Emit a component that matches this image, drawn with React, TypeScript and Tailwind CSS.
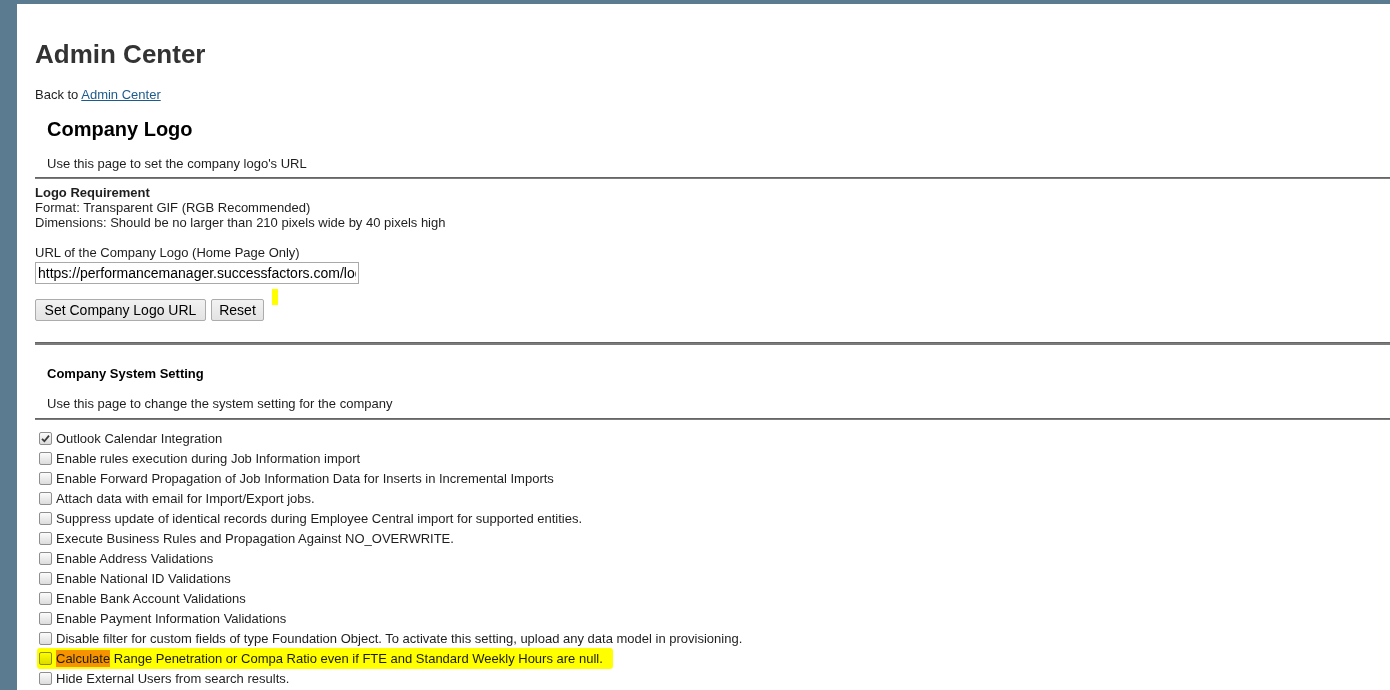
import React from 'react';

const settings: { label: string; checked?: boolean; mark?: boolean }[] = [
  { label: 'Outlook Calendar Integration', checked: true },
  { label: 'Enable rules execution during Job Information import' },
  { label: 'Enable Forward Propagation of Job Information Data for Inserts in Incremental Imports' },
  { label: 'Attach data with email for Import/Export jobs.' },
  { label: 'Suppress update of identical records during Employee Central import for supported entities.' },
  { label: 'Execute Business Rules and Propagation Against NO_OVERWRITE.' },
  { label: 'Enable Address Validations' },
  { label: 'Enable National ID Validations' },
  { label: 'Enable Bank Account Validations' },
  { label: 'Enable Payment Information Validations' },
  { label: 'Disable filter for custom fields of type Foundation Object. To activate this setting, upload any data model in provisioning.' },
  { label: 'Calculate Range Penetration or Compa Ratio even if FTE and Standard Weekly Hours are null.', mark: true },
  { label: 'Hide External Users from search results.' },
];

const Checkbox: React.FC<{ checked?: boolean }> = ({ checked }) => (
  <span className="w-[13px] h-[13px] shrink-0 rounded-[2px] border border-[#8e8f8f] bg-gradient-to-b from-[#fcfcfc] to-[#dcdcdc] flex items-center justify-center">
    {checked && (
      <svg width="9" height="9" viewBox="0 0 9 9">
        <path d="M1 4.8 L3.4 7.2 L8 1.6" fill="none" stroke="#3c3c3c" strokeWidth="1.8" />
      </svg>
    )}
  </span>
);

const Divider: React.FC<{ thick?: boolean; className?: string }> = ({ thick, className }) => (
  <div className={`${thick ? 'h-[3px]' : 'h-[2px]'} bg-[#7b7b7b] border-t border-[#666] ${className ?? ''}`} />
);

export default function App() {
  return (
    <div className="min-h-[690px] h-[690px] overflow-hidden bg-[#5b7b91] pt-[4px] pl-[17px] font-['Liberation_Sans',Arial,sans-serif] text-[#1e1e1e]">
      <div className="bg-white h-full pl-[18px]">
        <h1 className="pt-[35px] text-[26px] leading-[30px] font-bold text-[#333]">Admin Center</h1>
        <div className="mt-[18px] text-[13px] leading-[15px]">
          Back to <a className="text-[#1d5b8c] underline" href="#">Admin Center</a>
        </div>

        <h2 className="mt-[15px] pl-[12px] text-[20px] leading-[24px] font-bold text-black">Company Logo</h2>
        <div className="mt-[15px] pl-[12px] text-[13px] leading-[15px]">Use this page to set the company logo's URL</div>
        <Divider className="mt-[6px]" />

        <div className="mt-[6px] text-[13px] leading-[15px]">
          <div className="font-bold">Logo Requirement</div>
          <div>Format: Transparent GIF (RGB Recommended)</div>
          <div>Dimensions: Should be no larger than 210 pixels wide by 40 pixels high</div>
          <div className="mt-[15px]">URL of the Company Logo (Home Page Only)</div>
        </div>
        <input
          readOnly
          value="https://performancemanager.successfactors.com/logo"
          className="mt-[2px] block w-[324px] h-[22px] px-[2px] border border-[#a9a9a9] text-[14px] text-black outline-none"
        />
        <div className="mt-[15px] flex items-center gap-[5px] relative">
          <button className="w-[171px] h-[22px] rounded-[2px] border border-[#acacac] bg-gradient-to-b from-[#f2f2f2] to-[#e3e3e3] text-[14px] text-black">
            Set Company Logo URL
          </button>
          <button className="w-[53px] h-[22px] rounded-[2px] border border-[#acacac] bg-gradient-to-b from-[#f2f2f2] to-[#e3e3e3] text-[14px] text-black">
            Reset
          </button>
          <span className="absolute left-[237px] -top-[10px] w-[6px] h-[16px] bg-[#ffff00]" />
        </div>

        <Divider thick className="mt-[21px]" />
        <h3 className="mt-[21px] pl-[12px] text-[13px] leading-[15px] font-bold text-black">Company System Setting</h3>
        <div className="mt-[15px] pl-[12px] text-[13px] leading-[15px]">Use this page to change the system setting for the company</div>
        <Divider className="mt-[7px]" />

        <div className="mt-[8px] text-[13px]">
          {settings.map((s) => (
            <div key={s.label} className="h-[20px] flex items-center pl-[4px] gap-[4px] relative">
              <Checkbox checked={s.checked} />
              {s.mark ? (
                <span className="leading-[15px]">
                  <span className="inline-block bg-[#f7931e] py-[1px] -my-[1px]">Calculate</span>
                  {s.label.slice('Calculate'.length)}
                </span>
              ) : (
                <span className="leading-[15px]">{s.label}</span>
              )}
              {s.mark && (
                <span className="absolute left-[2px] top-0 w-[576px] h-[21px] rounded-[3px] bg-[#ffff00] mix-blend-multiply pointer-events-none" />
              )}
            </div>
          ))}
        </div>
      </div>
    </div>
  );
}
